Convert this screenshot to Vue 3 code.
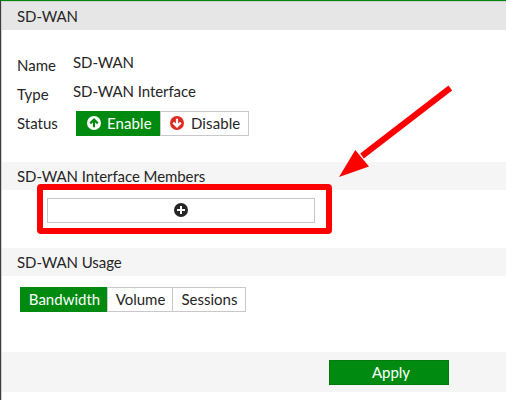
<script setup>
import { ref } from 'vue'

const status = ref('enable')
const usage = ref('Bandwidth')
const usageModes = ['Bandwidth', 'Volume', 'Sessions']
</script>

<template>
  <main class="page">
    <h1 class="bar title">SD-WAN</h1>
    <section class="fields">
      <div class="row">
        <span class="label">Name</span><span class="value">SD-WAN</span>
      </div>
      <div class="row">
        <span class="label">Type</span><span class="value">SD-WAN Interface</span>
      </div>
      <div class="row">
        <span class="label">Status</span>
        <div class="group">
          <button class="option enable" :class="{ active: status === 'enable' }" @click="status = 'enable'">
            <svg class="icon" viewBox="0 0 14 14">
              <circle cx="7" cy="7" r="7" fill="#fff" />
              <path d="M7 11.3V3.8M3.2 7.4L7 3.6L10.8 7.4" fill="none" stroke="#008a10" stroke-width="2.2" />
            </svg>
            <span>Enable</span>
          </button>
          <button class="option disable" :class="{ active: status === 'disable' }" @click="status = 'disable'">
            <svg class="icon" viewBox="0 0 14 14">
              <circle cx="7" cy="7" r="7" fill="#df2a20" />
              <path d="M7 2.7V10.2M3.2 6.6L7 10.4L10.8 6.6" fill="none" stroke="#fff" stroke-width="2.2" />
            </svg>
            <span>Disable</span>
          </button>
        </div>
      </div>
    </section>

    <h2 class="bar">SD-WAN Interface Members</h2>
    <section class="members">
      <button class="add" aria-label="Add member">
        <svg class="icon" viewBox="0 0 14 14">
          <circle cx="7" cy="7" r="7" fill="#262626" />
          <path d="M7 3V11M3 7H11" stroke="#fff" stroke-width="2" />
        </svg>
      </button>
    </section>

    <h2 class="bar">SD-WAN Usage</h2>
    <section class="usage">
      <div class="group">
        <button
          v-for="mode in usageModes"
          :key="mode"
          class="option"
          :class="[mode.toLowerCase(), { active: usage === mode }]"
          @click="usage = mode"
        >{{ mode }}</button>
      </div>
    </section>

    <footer class="footer"><button class="apply">Apply</button></footer>

    <div class="highlight"></div>
    <svg class="arrow" viewBox="0 0 116 92">
      <path d="M112.3 3L24 71" stroke="#f00" stroke-width="6" />
      <path d="M1 92L17.3 65L31 81.5Z" fill="#f00" />
    </svg>
  </main>
</template>

<style>
body {
  margin: 0;
  background: #fff;
}
</style>

<style scoped>
.page {
  position: relative;
  box-sizing: border-box;
  height: 400px;
  overflow: hidden;
  border-top: 1px solid #008a10;
  border-left: 1px solid #3c3c3c;
  box-shadow: inset 1px 1px #d0d0d0;
  padding: 1px 0 0 1px;
  color: #262626;
  font: 15px/18px Lato, "Open Sans", sans-serif;
}
.bar {
  box-sizing: border-box;
  height: 28px;
  margin: 0;
  padding: 5px 0 5px 15px;
  background: #f5f5f5;
  font-size: 15px;
  font-weight: 400;
  letter-spacing: -0.07px;
  line-height: 18px;
}
.title {
  background: #e6e6e6;
}
.fields {
  box-sizing: border-box;
  height: 132px;
  padding: 23px 0 0 15px;
}
.row {
  display: flex;
  height: 29px;
}
.label {
  width: 56px;
  padding-top: 3px;
}
.value {
  letter-spacing: -0.07px;
}
.group {
  display: flex;
}
.row .group {
  margin-left: 3px;
}
button {
  box-sizing: border-box;
  height: 25px;
  margin: 0;
  padding: 0 0 2px;
  border: 1px solid #c8c8c8;
  border-radius: 0;
  background: #fff;
  color: inherit;
  font: inherit;
}
.option {
  display: flex;
  align-items: center;
  justify-content: center;
  border-left-width: 0;
}
.active {
  border-color: #008a10;
  background: #008a10;
  color: #fff;
}
.row .option {
  justify-content: flex-start;
}
.enable {
  width: 84px;
  padding-left: 11px;
  gap: 6px;
}
.disable {
  width: 89px;
  border-left-width: 1px;
  padding-left: 9px;
  gap: 7px;
}
.row .option span {
  letter-spacing: 0.1px;
}
.icon {
  display: block;
  width: 14px;
  height: 14px;
}
.members {
  box-sizing: border-box;
  height: 58px;
  padding: 8px 0 0 45px;
}
.add {
  display: flex;
  align-items: center;
  justify-content: center;
  width: 268px;
}
.usage {
  box-sizing: border-box;
  height: 76px;
  padding: 11px 0 0 18px;
}
.bandwidth {
  width: 87px;
  padding-left: 3px;
}
.volume {
  width: 66px;
  border-left-width: 1px;
  padding-left: 1px;
}
.sessions {
  width: 73px;
  padding-left: 1px;
}
.footer {
  box-sizing: border-box;
  height: 40px;
  padding: 8px 0 0 327px;
  background: #f5f5f5;
}
.apply {
  display: block;
  width: 120px;
  padding-left: 4px;
  border-color: #007c0e;
  background: #008a10;
  color: #fff;
}
/* Callout layer above the form */
.highlight {
  position: absolute;
  top: 183px;
  left: 36px;
  box-sizing: border-box;
  width: 295px;
  height: 50px;
  border: 6px solid #f00;
  border-radius: 4px;
  pointer-events: none;
}
.arrow {
  position: absolute;
  top: 84px;
  left: 337px;
  width: 116px;
  height: 92px;
  pointer-events: none;
}
</style>
